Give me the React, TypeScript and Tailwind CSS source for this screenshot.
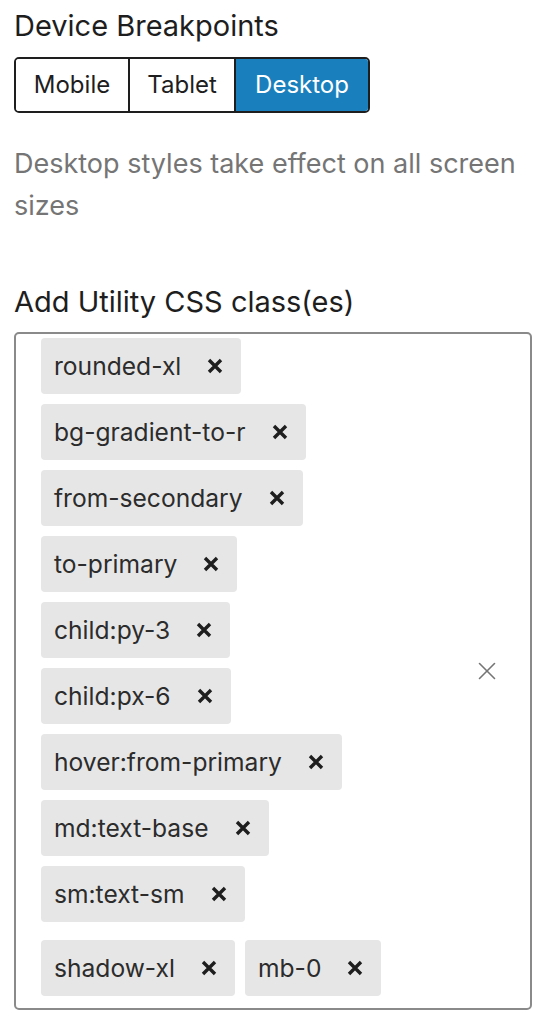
import { X } from 'lucide-react';

const tags = [
    ["rounded-xl"],
    ["bg-gradient-to-r"],
    ["from-secondary"],
    ["to-primary"],
    ["child:py-3"],
    ["child:px-6"],
    ["hover:from-primary"],
    ["md:text-base"],
    ["sm:text-sm"],
];

const lastRow = ["shadow-xl", "mb-0"];

const Tag = ({ label }: { label: string }) => (
    <div className="flex items-center h-[56px] pl-[13px] pr-[18px] gap-[26px] bg-[#e6e6e6] rounded-[4px] text-[24.6px] text-[#2c2c2c]">
        <span>{label}</span>
        <svg width="16" height="16" viewBox="0 0 16 16" className="shrink-0">
            <path d="M2 2 L14 14 M14 2 L2 14" stroke="#1e1e1e" strokeWidth="3.4" strokeLinecap="butt" />
        </svg>
    </div>
);

export default function App() {
    return (
        <div className="w-[546px] h-[1024px] bg-white pl-[14px] pr-[14px] pt-[8px] font-['Inter',sans-serif] text-[#1e1e1e]">
            {/* Breakpoints */}
            <h2 className="text-[29px] leading-[36px] font-normal">Device Breakpoints</h2>
            <div className="mt-[13px] flex w-[356px] h-[56px] border-2 border-[#1e1e1e] rounded-[5px] overflow-hidden text-[24px]">
                <button className="w-[114px] flex items-center justify-center border-r-2 border-[#1e1e1e] bg-white">Mobile</button>
                <button className="w-[106px] flex items-center justify-center border-r-2 border-[#1e1e1e] bg-white">Tablet</button>
                <button className="flex-1 flex items-center justify-center bg-[#1a7fbd] text-white">Desktop</button>
            </div>
            <p className="mt-[30px] text-[27px] leading-[42px] text-[#757575]">
                Desktop styles take effect on all screen sizes
            </p>

            {/* Utility classes */}
            <h2 className="mt-[57px] text-[29px] leading-[36px]">Add Utility CSS class(es)</h2>
            <div className="relative mt-[12px] w-[518px] border-2 border-[#8a8a8a] rounded-[5px] pl-[25px] pt-[4px] pb-[12px]">
                <div className="flex flex-col items-start gap-[10px]">
                    {tags.map(([t]) => (
                        <Tag key={t} label={t} />
                    ))}
                    <div className="flex gap-[10px] mt-[8px]">
                        {lastRow.map((t) => (
                            <Tag key={t} label={t} />
                        ))}
                    </div>
                </div>
                <X className="absolute right-[28px] top-1/2 -translate-y-1/2 w-[30px] h-[30px] text-[#757575]" strokeWidth={1.3} />
            </div>
        </div>
    );
}
